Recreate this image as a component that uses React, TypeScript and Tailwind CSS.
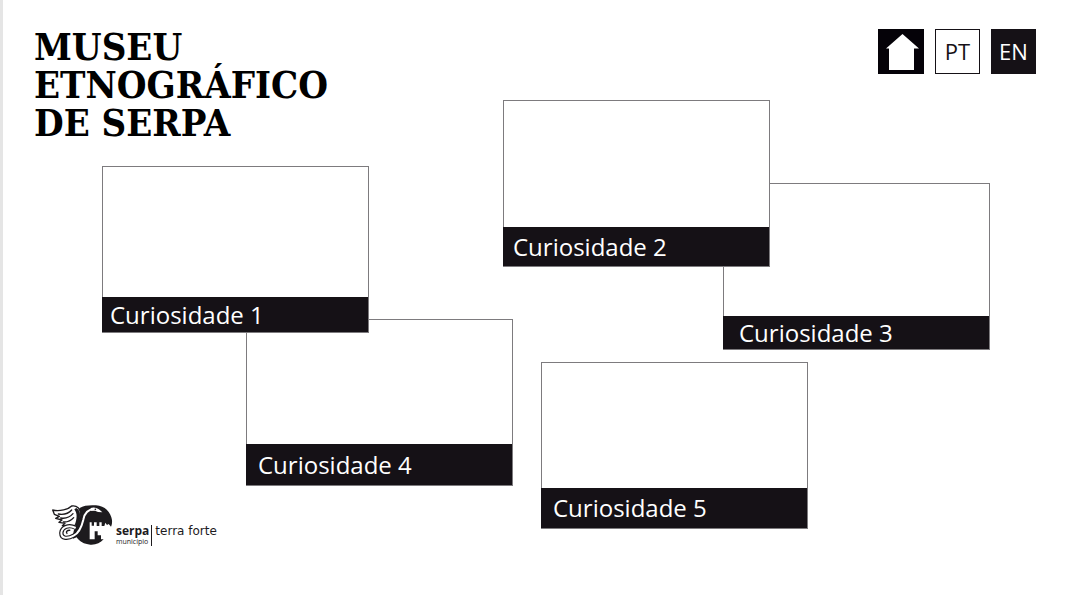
type Curiosity = { title: string; place: string; caption: string };

const curiosities: Curiosity[] = [
  { title: "Curiosidade 3", place: "left-[720px] top-[183px]", caption: "h-[33px] pl-4" },
  { title: "Curiosidade 4", place: "left-[243px] top-[319px]", caption: "h-[41px] pl-3" },
  { title: "Curiosidade 1", place: "left-[99px] top-[166px]", caption: "h-[35px] pl-2" },
  { title: "Curiosidade 2", place: "left-[500px] top-[100px]", caption: "h-[39px] pl-2.5" },
  { title: "Curiosidade 5", place: "left-[538px] top-[362px]", caption: "h-10 pl-3" },
];

function CuriosityTile({ title, place, caption }: Curiosity) {
  return (
    <a
      href="#"
      className={`absolute flex h-[167px] w-[267px] flex-col justify-end border border-[#7d7b7e] bg-white ${place}`}
    >
      <span
        className={`-ml-px flex items-center bg-[#151116] text-2xl text-white ${caption}`}
      >
        {title}
      </span>
    </a>
  );
}

function HomeIcon() {
  return (
    <svg viewBox="0 0 46 45" className="h-full w-full" fill="#fff" aria-hidden="true">
      <path d="M24.5 5 41 19.5H36V41H11V19.5H8Z" />
    </svg>
  );
}

function Emblem() {
  return (
    <svg viewBox="0 0 240 165" className="h-[55px] w-20" aria-hidden="true">
      <path
        fill="#1d1b1e"
        d="M104 24C116 16 134 15 153 16C176 17 193 32 199 52C203 63 201 74 198 80L191 72L186 75L181 68L178 78H170V67H163V78H155V67H147V77H140V67H134V118H149V94H158V106H168V118H176C166 129 153 135 136 134C117 133 103 124 95 112L84 116C83 100 87 88 93 75L88 62Z"
      />
      <path
        d="M23 30C44 35 70 28 80 18C96 15 107 27 106 43C105 60 97 72 85 80L52 77L60 70L42 67L51 60L32 55L43 49L28 43Z"
        fill="#fff"
        stroke="#1d1b1e"
        strokeWidth="4"
        strokeLinejoin="round"
      />
      <path
        d="M94 24C107 31 109 50 98 68L89 76C96 57 98 41 88 28Z"
        fill="#1d1b1e"
      />
      <g fill="none" stroke="#1d1b1e" strokeWidth="4" strokeLinecap="round">
        <path d="M40 42C58 45 72 39 80 30M47 54C64 57 76 50 84 41M55 66C69 67 79 61 86 53" />
      </g>
      <path
        d="M91 83C72 73 51 81 49 98C48 118 70 116 86 107C105 97 111 76 115 59C119 39 130 27 147 28"
        fill="none"
        stroke="#1d1b1e"
        strokeWidth="13"
      />
      <path
        d="M92 84C72 73 51 81 49 98C48 118 70 116 86 107C105 97 111 76 115 59C119 39 130 27 149 28"
        fill="none"
        stroke="#fff"
        strokeWidth="6"
      />
      <path
        d="M76 91C66 90 61 96 67 101"
        fill="none"
        stroke="#1d1b1e"
        strokeWidth="4"
      />
      <path d="M137 24C150 19 162 26 172 37L159 36L150 32H137Z" fill="#fff" />
      <circle cx="151" cy="28" r="2.5" fill="#1d1b1e" />
    </svg>
  );
}

export default function App() {
  return (
    <div className="relative flex min-h-screen flex-col justify-between border-l-[3px] border-[#e5e5e5] bg-white font-['Open_Sans','Noto_Sans',sans-serif] text-black">
      <header className="flex items-start justify-between px-[31px] pt-7">
        <h1 className="font-['DejaVu_Serif_Condensed','DejaVu_Serif',serif] text-[38px] font-bold leading-[38px]">
          MUSEU
          <br />
          ETNOGRÁFICO
          <br />
          DE SERPA
        </h1>
        <nav className="flex gap-[11px] pt-px text-[22px]" aria-label="Menu">
          <a href="#" aria-label="Home" className="h-[45px] w-[46px] bg-[#050208]">
            <HomeIcon />
          </a>
          <button
            type="button"
            className="flex size-[45px] items-center justify-center border border-[#151116] text-[#151116]"
          >
            PT
          </button>
          <button
            type="button"
            className="flex size-[45px] items-center justify-center bg-[#151116] text-white"
          >
            EN
          </button>
        </nav>
      </header>

      <main>
        {curiosities.map((item) => (
          <CuriosityTile key={item.title} {...item} />
        ))}
      </main>

      <footer className="flex items-center pb-10 pl-[42px] text-[#1d1b1e]">
        <Emblem />
        <div className="-ml-[9px] flex pt-4">
          <div className="border-r border-[#1d1b1e] pr-0.5">
            <p className="text-[12px] font-bold leading-3">serpa</p>
            <p className="text-[7px] font-medium leading-[9px]">município</p>
          </div>
          <p className="pl-[3px] font-['DejaVu_Sans',sans-serif] text-[12px] leading-3">
            terra forte
          </p>
        </div>
      </footer>
    </div>
  );
}
